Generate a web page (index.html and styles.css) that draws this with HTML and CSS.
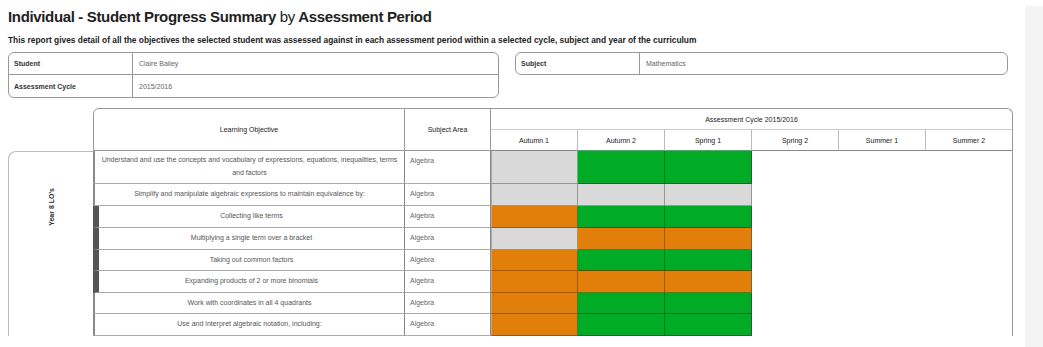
FILE: index.html
```html
<!DOCTYPE html>
<html>
<head>
<meta charset="utf-8">
<link rel="stylesheet" href="styles.css">
</head>
<body>
<div class="page">
  <div class="main">
    <h1 class="title">Individual - Student Progress Summary <span class="light">by</span> Assessment Period</h1>
    <p class="intro">This report gives detail of all the objectives the selected student was assessed against in each assessment period within a selected cycle, subject and year of the curriculum</p>
    <div class="info">
      <div class="info-box info-left">
        <div class="info-row"><div class="info-label">Student</div><div class="info-value">Claire Bailey</div></div>
        <div class="info-row"><div class="info-label">Assessment Cycle</div><div class="info-value">2015/2016</div></div>
      </div>
      <div class="info-box info-right">
        <div class="info-row"><div class="info-label">Subject</div><div class="info-value">Mathematics</div></div>
      </div>
    </div>
    <div class="grid">
      <div class="corner"></div>
      <div class="h-lo">Learning Objective</div>
      <div class="h-sa">Subject Area</div>
      <div class="h-cycle">Assessment Cycle 2015/2016</div>
      <div class="h-p">Autumn 1</div>
      <div class="h-p">Autumn 2</div>
      <div class="h-p">Spring 1</div>
      <div class="h-p">Spring 2</div>
      <div class="h-p">Summer 1</div>
      <div class="h-p h-last">Summer 2</div>

      <div class="group"><span class="group-text">Year 8 LO's</span></div>
      <div class="empty"></div>

      <div class="lo">Understand and use the concepts and vocabulary of expressions, equations, inequalities, terms and factors</div>
      <div class="sa">Algebra</div>
      <div class="c c1 grey"></div><div class="c green"></div><div class="c green"></div>

      <div class="lo">Simplify and manipulate algebraic expressions to maintain equivalence by:</div>
      <div class="sa">Algebra</div>
      <div class="c c1 grey"></div><div class="c grey"></div><div class="c grey"></div>

      <div class="lo sub">Collecting like terms</div>
      <div class="sa">Algebra</div>
      <div class="c c1 orange"></div><div class="c green"></div><div class="c green"></div>

      <div class="lo sub">Multiplying a single term over a bracket</div>
      <div class="sa">Algebra</div>
      <div class="c c1 grey"></div><div class="c orange"></div><div class="c orange"></div>

      <div class="lo sub">Taking out common factors</div>
      <div class="sa">Algebra</div>
      <div class="c c1 orange"></div><div class="c green"></div><div class="c green"></div>

      <div class="lo sub">Expanding products of 2 or more binomials</div>
      <div class="sa">Algebra</div>
      <div class="c c1 orange"></div><div class="c orange"></div><div class="c orange"></div>

      <div class="lo">Work with coordinates in all 4 quadrants</div>
      <div class="sa">Algebra</div>
      <div class="c c1 orange"></div><div class="c green"></div><div class="c green"></div>

      <div class="lo">Use and interpret algebraic notation, including:</div>
      <div class="sa">Algebra</div>
      <div class="c c1 orange"></div><div class="c green"></div><div class="c green"></div>
    </div>
  </div>
  <div class="strip"></div>
</div>
</body>
</html>
```
FILE: styles.css
```css
html, body {
  margin: 0;
  padding: 0;
  background: #fff;
  overflow: hidden;
}
body {
  font-family: "Liberation Sans", Arial, sans-serif;
  color: #333;
}
.page {
  display: flex;
  height: 347px;
}
.main {
  width: 1025px;
  height: 338px;
  overflow: hidden;
  padding-left: 8px;
  box-sizing: border-box;
}
.strip {
  width: 18px;
  margin-top: 6px;
  height: 341px;
  background: #f4f4f4;
}
.title {
  margin: 7px 0 0;
  font-size: 15px;
  line-height: 20px;
  font-weight: bold;
  letter-spacing: -0.35px;
  color: #222;
}
.title .light {
  font-weight: normal;
}
.intro {
  margin: 8px 0 0;
  font-size: 8.4px;
  line-height: 10px;
  font-weight: bold;
  color: #222;
}
.info {
  display: flex;
  gap: 16px;
  margin-top: 7px;
  align-items: flex-start;
}
.info-box {
  border: 1px solid #999;
  border-radius: 6px;
  box-sizing: border-box;
}
.info-left { width: 491px; }
.info-right { width: 493px; }
.info-row {
  display: flex;
  height: 21px;
  font-size: 7px;
}
.info-row + .info-row {
  border-top: 1px solid #999;
  height: 22px;
}
.info-label {
  width: 118px;
  border-right: 1px solid #999;
  padding-left: 5px;
  font-weight: bold;
  display: flex;
  align-items: center;
  color: #333;
}
.info-value {
  padding-left: 6px;
  display: flex;
  align-items: center;
  color: #666;
}
.grid {
  margin-top: 10px;
  display: grid;
  grid-template-columns: 85px 312px 86px repeat(6, 87px);
  grid-template-rows: 22px 21px 33px 22px 22px 22px 21px 22px 21px 22px;
  font-size: 7px;
}
.grid > div {
  box-sizing: border-box;
}
.corner {
  grid-column: 1;
  grid-row: 1 / 3;
}
.h-lo, .h-sa, .h-cycle, .h-p {
  display: flex;
  align-items: center;
  justify-content: center;
  color: #222;
}
.h-lo {
  grid-column: 2;
  grid-row: 1 / 3;
  border: 1px solid #999;
  border-top-left-radius: 6px;
}
.h-sa {
  grid-column: 3;
  grid-row: 1 / 3;
  border-top: 1px solid #999;
  border-bottom: 1px solid #999;
  border-right: 1px solid #999;
}
.h-cycle {
  grid-column: 4 / 10;
  grid-row: 1;
  border-top: 1px solid #999;
  border-right: 1px solid #999;
  border-bottom: 1px solid #ccc;
  border-top-right-radius: 6px;
}
.h-p {
  grid-row: 2;
  border-right: 1px solid #bbb;
  border-bottom: 1px solid #888;
}
.h-last {
  border-right-color: #999;
}
.group {
  grid-column: 1;
  grid-row: 3 / 11;
  border-top: 1px solid #bbb;
  border-left: 1px solid #bbb;
  border-top-left-radius: 8px;
  display: flex;
  justify-content: center;
  align-items: flex-start;
  padding-top: 36px;
}
.group-text {
  writing-mode: vertical-rl;
  transform: rotate(180deg);
  font-weight: bold;
  color: #333;
}
.empty {
  grid-column: 7 / 10;
  grid-row: 3 / 11;
  border-right: 1px solid #999;
}
.lo {
  grid-column: 2;
  border-left: 2px solid #888;
  border-right: 1px solid #888;
  border-bottom: 1px solid #aaa;
  display: flex;
  align-items: center;
  justify-content: center;
  text-align: center;
  padding: 0 6px;
  line-height: 12.6px;
  color: #555;
}
.lo.sub {
  border-left: 6px solid #555;
}
.sa {
  grid-column: 3;
  border-right: 1px solid #888;
  border-bottom: 1px solid #aaa;
  padding-left: 5px;
  padding-top: 5px;
  line-height: 10px;
  color: #666;
}
.c {
  border-right: 1px solid rgba(0, 0, 0, 0.3);
  border-bottom: 1px solid rgba(0, 0, 0, 0.3);
}
.c1 {
  grid-column: 4;
  border-left: 1px solid #aaa;
}
.grey { background: #d9d9d9; }
.green { background: #00ac26; }
.orange { background: #e27f0b; }
```
